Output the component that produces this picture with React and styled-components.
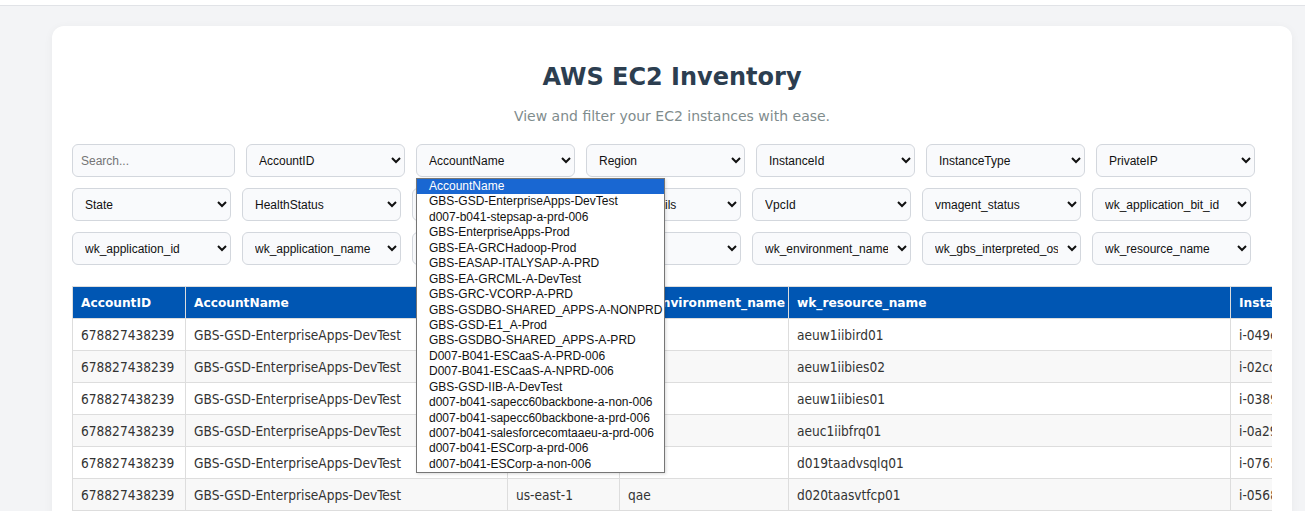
import React from 'react';
import styled, { createGlobalStyle } from 'styled-components';

const filterRows = [
  ['AccountID', 'AccountName', 'Region', 'InstanceId', 'InstanceType', 'PrivateIP'],
  ['State', 'HealthStatus', 'Platform', 'PlatformDetails', 'VpcId', 'vmagent_status', 'wk_application_bit_id'],
  ['wk_application_id', 'wk_application_name', 'wk_application_owner', 'wk_division', 'wk_environment_name', 'wk_gbs_interpreted_os', 'wk_resource_name'],
];

const accountNames = [
  'AccountName',
  'GBS-GSD-EnterpriseApps-DevTest',
  'd007-b041-stepsap-a-prd-006',
  'GBS-EnterpriseApps-Prod',
  'GBS-EA-GRCHadoop-Prod',
  'GBS-EASAP-ITALYSAP-A-PRD',
  'GBS-EA-GRCML-A-DevTest',
  'GBS-GRC-VCORP-A-PRD',
  'GBS-GSDBO-SHARED_APPS-A-NONPRD',
  'GBS-GSD-E1_A-Prod',
  'GBS-GSDBO-SHARED_APPS-A-PRD',
  'D007-B041-ESCaaS-A-PRD-006',
  'D007-B041-ESCaaS-A-NPRD-006',
  'GBS-GSD-IIB-A-DevTest',
  'd007-b041-sapecc60backbone-a-non-006',
  'd007-b041-sapecc60backbone-a-prd-006',
  'd007-b041-salesforcecomtaaeu-a-prd-006',
  'd007-b041-ESCorp-a-prd-006',
  'd007-b041-ESCorp-a-non-006',
];

const columns = [
  { key: 'accountId', label: 'AccountID', width: 113 },
  { key: 'accountName', label: 'AccountName', width: 322 },
  { key: 'region', label: 'Region', width: 112 },
  { key: 'env', label: 'wk_environment_name', width: 169 },
  { key: 'resource', label: 'wk_resource_name', width: 442 },
  { key: 'instanceId', label: 'InstanceId', width: 190 },
  { key: 'instanceType', label: 'InstanceType', width: 130 },
  { key: 'privateIp', label: 'PrivateIP', width: 130 },
];

const rows = [
  { region: 'eu-west-1', env: 'dev', resource: 'aeuw1iibird01', instanceId: 'i-049e3b7c1d2a5f804', instanceType: 't3.medium', privateIp: '10.42.16.21' },
  { region: 'eu-west-1', env: 'dev', resource: 'aeuw1iibies02', instanceId: 'i-02cc81f4a9e07b3d2', instanceType: 't3.large', privateIp: '10.42.16.34' },
  { region: 'eu-west-1', env: 'dev', resource: 'aeuw1iibies01', instanceId: 'i-0389d5a62e1fc47b0', instanceType: 't3.large', privateIp: '10.42.16.33' },
  { region: 'eu-central-1', env: 'qae', resource: 'aeuc1iibfrq01', instanceId: 'i-0a29f6c03b8e714d5', instanceType: 'm5.large', privateIp: '10.44.8.12' },
  { region: 'us-east-1', env: 'dev', resource: 'd019taadvsqlq01', instanceId: 'i-0765e2b94c1a3df86', instanceType: 'r5.xlarge', privateIp: '10.12.4.57' },
  { region: 'us-east-1', env: 'qae', resource: 'd020taasvtfcp01', instanceId: 'i-0568c1d7e40b92fa3', instanceType: 'm5.xlarge', privateIp: '10.12.4.88' },
  { region: 'us-east-1', env: 'qae', resource: 'd020taasvtfcp02', instanceId: 'i-0f13a8be5c62d7049', instanceType: 'm5.xlarge', privateIp: '10.12.4.89' },
  { region: 'us-east-1', env: 'prd', resource: 'd020taasvtfcp03', instanceId: 'i-0b7d42e91fa6c3058', instanceType: 'm5.xlarge', privateIp: '10.12.4.90' },
].map((r) => ({ accountId: '678827438239', accountName: 'GBS-GSD-EnterpriseApps-DevTest', ...r }));

const tableWidth = columns.reduce((sum, c) => sum + c.width, 0);

const App = () => {
  return (
    <>
      <GlobalStyle />
      <TopBar />
      <Page>
        <Card>
          <Title>AWS EC2 Inventory</Title>
          <Subtitle>View and filter your EC2 instances with ease.</Subtitle>

          <Filters>
            <SearchInput placeholder="Search..." />
            {filterRows.flat().map((name) => (
              <FilterField key={name}>
                <FilterSelect defaultValue="">
                  <option value="">{name}</option>
                </FilterSelect>
                {/* AccountName is shown with its option list open */}
                {name === 'AccountName' && (
                  <OptionList>
                    {accountNames.map((opt, i) => (
                      <OptionItem key={opt} selected={i === 0}>
                        {opt}
                      </OptionItem>
                    ))}
                  </OptionList>
                )}
              </FilterField>
            ))}
          </Filters>

          <TableScroll>
            <Table style={{ width: tableWidth }}>
              <colgroup>
                {columns.map((c) => (
                  <col key={c.key} style={{ width: c.width }} />
                ))}
              </colgroup>
              <thead>
                <tr>
                  {columns.map((c) => (
                    <HeadCell key={c.key}>{c.label}</HeadCell>
                  ))}
                </tr>
              </thead>
              <tbody>
                {rows.map((r, i) => (
                  <BodyRow key={r.instanceId} striped={i % 2 === 1}>
                    {columns.map((c) => (
                      <Cell key={c.key}>{r[c.key]}</Cell>
                    ))}
                  </BodyRow>
                ))}
              </tbody>
            </Table>
          </TableScroll>
        </Card>
      </Page>
    </>
  );
};

export default App;

const GlobalStyle = createGlobalStyle`
  html, body {
    margin: 0;
    padding: 0;
    overflow: hidden;
  }
  body {
    background: #f3f4f6;
    font-family: "DejaVu Sans", Verdana, sans-serif;
  }
`;

const TopBar = styled.div`
  height: 5px;
  background: #ffffff;
  border-bottom: 1px solid #e1e3e7;
`;

const Page = styled.div`
  padding: 20px 13px 0 52px;
`;

const Card = styled.div`
  background: #ffffff;
  border-radius: 12px;
  box-shadow: 0 2px 10px rgba(0, 0, 0, 0.05);
  padding: 37px 20px 20px;
`;

const Title = styled.h1`
  margin: 0 0 16px;
  text-align: center;
  font-family: "DejaVu Sans", Verdana, sans-serif;
  font-size: 24px;
  line-height: 28px;
  font-weight: bold;
  color: #2c3e50;
`;

const Subtitle = styled.p`
  margin: 0 0 19px;
  text-align: center;
  font-size: 14px;
  line-height: 18px;
  color: #7f8c8d;
`;

const Filters = styled.div`
  display: flex;
  flex-wrap: wrap;
  gap: 11px;
  margin-bottom: 21px;
`;

const fieldBase = `
  box-sizing: border-box;
  height: 33px;
  border: 1px solid #d3d7dd;
  border-radius: 6px;
  background: #f9fafc;
  font-family: "Liberation Sans", Arial, sans-serif;
  font-size: 12px;
  color: #111111;
  outline: none;
`;

const SearchInput = styled.input`
  ${fieldBase}
  width: 163px;
  padding: 0 8px;

  &::placeholder {
    color: #757575;
  }
`;

const FilterField = styled.div`
  position: relative;
  width: 159px;
`;

const FilterSelect = styled.select`
  ${fieldBase}
  width: 100%;
  padding: 0 6px 0 8px;
`;

const OptionList = styled.div`
  position: absolute;
  top: 34px;
  left: 0;
  z-index: 10;
  box-sizing: border-box;
  width: 249px;
  background: #ffffff;
  border: 1px solid #767676;
  box-shadow: 1px 1px 3px rgba(0, 0, 0, 0.15);
`;

const OptionItem = styled.div`
  height: 15.45px;
  line-height: 15.45px;
  padding-left: 12px;
  white-space: nowrap;
  overflow: hidden;
  font-family: "Liberation Sans", Arial, sans-serif;
  font-size: 12px;
  color: ${({ selected }) => (selected ? '#ffffff' : '#111111')};
  background: ${({ selected }) => (selected ? '#1967d2' : 'transparent')};
`;

const TableScroll = styled.div`
  overflow-x: auto;
`;

const Table = styled.table`
  border-collapse: collapse;
  table-layout: fixed;
`;

const HeadCell = styled.th`
  height: 32px;
  padding: 0 8px;
  box-sizing: border-box;
  background: #0056b3;
  color: #ffffff;
  border: 1px solid #dddddd;
  text-align: left;
  font-family: "DejaVu Sans", Verdana, sans-serif;
  font-size: 12.2px;
  font-weight: bold;
  white-space: nowrap;
  overflow: hidden;
`;

const BodyRow = styled.tr`
  background: ${({ striped }) => (striped ? '#f8f8f8' : '#ffffff')};
`;

const Cell = styled.td`
  height: 32px;
  padding: 0 8px;
  box-sizing: border-box;
  border: 1px solid #dddddd;
  font-family: "DejaVu Sans Condensed", "DejaVu Sans", sans-serif;
  font-size: 13.6px;
  color: #333333;
  white-space: nowrap;
  overflow: hidden;
`;
